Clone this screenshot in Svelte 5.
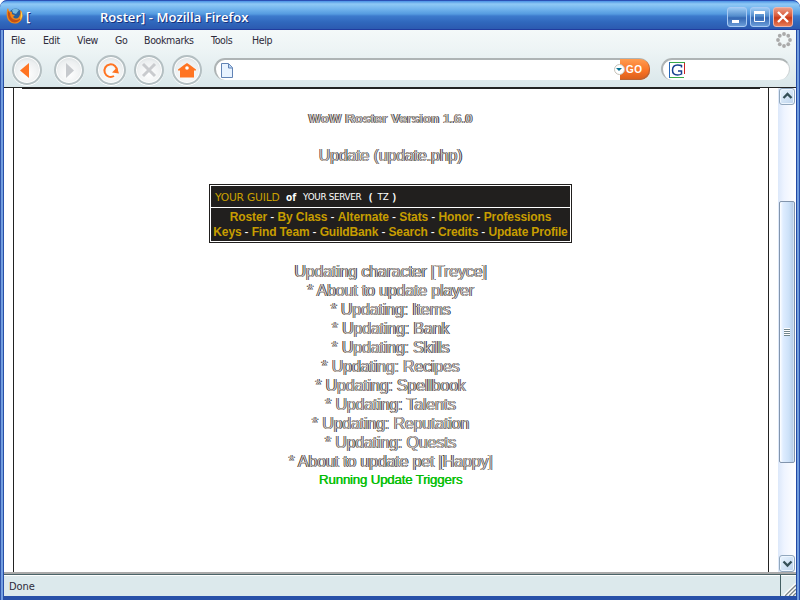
<script>
  const menus = [['File', 32], ['Edit', 34], ['View', 38], ['Go', 29], ['Bookmarks', 67], ['Tools', 41], ['Help', 30]];
  const rows = [
    ['Roster', 'By Class', 'Alternate', 'Stats', 'Honor', 'Professions'],
    ['Keys', 'Find Team', 'GuildBank', 'Search', 'Credits', 'Update Profile']
  ];
  const log = ['Updating character [Treyce]', '* About to update player', '* Updating: Items', '* Updating: Bank',
    '* Updating: Skills', '* Updating: Recipes', '* Updating: Spellbook', '* Updating: Talents',
    '* Updating: Reputation', '* Updating: Quests', '* About to update pet [Happy]'];
  const dots = Array.from({ length: 8 }, (_, i) => [8 + 6 * Math.cos(i * Math.PI / 4), 8 + 6 * Math.sin(i * Math.PI / 4)]);
</script>

<div class="window">
  <header class="title">
    <svg class="fox" width="18" height="18" viewBox="0 0 18 18">
      <circle cx="9.5" cy="8" r="6.5" fill="#285e9c" />
      <path d="M6 3Q9 0 13 3L10 7L7 6Z" fill="#78b9dd" />
      <path d="M1 3Q0 9 2 13Q6 18 12 16Q18 13 16 5L14 3Q15 7 13 10Q10 13 7 10L9 8Q5 8 6 5L3 4L2 1Z" fill="#ee871b" />
      <path d="M2 4Q1 12 6 15Q13 17 16 9Q14 13 10 13Q4 12 4 6Z" fill="#c45113" />
      <path d="M15 4Q18 9 14 13L15 8Z" fill="#ffd54c" />
    </svg>
    <span class="bracket">[</span><span class="caption">Roster] - Mozilla Firefox</span>
    <div class="controls">
      <span class="ctl"><svg width="20" height="20"><path d="M5 14.5h7" stroke="#fff" stroke-width="3" /></svg></span>
      <span class="ctl"><svg width="20" height="20"><path d="M4.5 5.5h10v9h-10z" fill="none" stroke="#fff" /><path d="M4 5.5h11" stroke="#fff" stroke-width="3" /></svg></span>
      <span class="ctl close"><svg width="20" height="20"><path d="M5 5l10 10M15 5L5 15" stroke="#fff" stroke-width="2.4" /></svg></span>
    </div>
  </header>

  <div class="chrome">
    <nav class="menu">
      {#each menus as [name, w]}<span style="width:{w}px">{name}</span>{/each}
      <svg class="throbber" width="16" height="16">
        {#each dots as [x, y]}<circle cx={x} cy={y} r="1.9" fill="#aaa" />{/each}
      </svg>
    </nav>
    <div class="tools">
      <span class="round"><svg width="30" height="30"><path d="M17 8v15L8 15.500z" fill="#ff7422" /></svg></span>
      <span class="round b2"><svg width="30" height="30"><path d="M12 8v15l8-7.500z" fill="#c6c9cd" /></svg></span>
      <span class="round b3"><svg width="30" height="30"><path d="M18 21A6.300 6.300 0 1 1 21 16" fill="none" stroke="#ff7422" stroke-width="2" /><path d="M16 17.500l5-5 2 6z" fill="#ff7422" /></svg></span>
      <span class="round b4"><svg width="30" height="30"><path d="M9 9l12 12M21 9L9 21" stroke="#c9cbce" stroke-width="3" /></svg></span>
      <span class="round b5"><svg width="30" height="30"><path d="M6 14.500l6-4.500 3-2 3 2 6 4.500v1h-2v7H8v-7H6z" fill="#ff7422" /><circle cx="15" cy="13" r="1.8" fill="#fff" /></svg></span>
      <div class="address">
        <svg width="12" height="15" viewBox="0 0 12 15"><path d="M.5 .5h7l4 4v10H.5z" fill="#e8f3ff" stroke="#6183b5" /><path d="M7.500 1v4h4" fill="#bcd6f6" stroke="#6183b5" /></svg>
        <span class="go"><i><svg width="10" height="10"><path d="M2 4h6L5 7z" fill="#067191" /></svg></i>GO</span>
      </div>
      <div class="search">
        <svg width="17" height="17"><path d="M1 .5h15M1 15.500h14" stroke="#39a948" /><path d="M.5 0v16" stroke="#2366b8" /><path d="M15.500 1v11" stroke="#c22" /><path d="M12.500 5.500V3.500Q11 3 8.500 3Q3.500 3 3.500 8.300Q3.500 13 8.500 13Q11 13 12.500 12V9H9" fill="none" stroke="#174090" stroke-width="1.500" /></svg>
      </div>
    </div>
  </div>

  <div class="view">
    <main>
      <div class="rule"></div>
      <div class="version faded">WoW Roster Version 1.6.0</div>
      <div class="heading faded">Update (update.php)</div>
      <section class="guild">
        <div class="guild-top"><span class="gold">YOUR GUILD</span><b>of</b><span class="server">YOUR SERVER</span><b class="paren">(</b><span class="tz">TZ</span><b>)</b></div>
        <div class="links">
          {#each rows as row, r}
            <div class:second={r === 1}>{#each row as link, i}{#if i}<em>{' - '}</em>{/if}{link}{/each}</div>
          {/each}
        </div>
      </section>
      <div class="log">
        {#each log as line}<div class="faded">{line}</div>{/each}
        <div class="running">Running Update Triggers</div>
      </div>
    </main>
    <aside class="scroll">
      <span class="arrow"><svg width="15" height="15"><path d="M3.500 9l4-4 4 4" fill="none" stroke="#355058" stroke-width="2.300" /></svg></span>
      <span class="thumb"><i></i></span>
      <span class="arrow"><svg width="15" height="15"><path d="M3.500 5.500l4 4 4-4" fill="none" stroke="#355058" stroke-width="2.300" /></svg></span>
    </aside>
  </div>

  <footer>
    <span>Done</span>
    <svg width="16" height="21"><path d="M.5 0v21" stroke="#435f63" /><path d="M4 21L16 9M8 21l8-8M12 21l4-4" stroke="#fff" stroke-width="2.500" /><path d="M5 21L16 10M9 21l7-7M13 21l3-3" stroke="#7c8587" stroke-width="1.300" /></svg>
  </footer>
</div>

<style>
  :global(body) { margin: 0; background: #fff; overflow: hidden; }
  * { box-sizing: border-box; }
  svg { display: block; flex: none; }
  .window { width: 800px; height: 600px; display: flex; flex-direction: column; padding: 0 4px 4px; border-radius: 7px 7px 0 0; overflow: hidden;
    background: linear-gradient(90deg, #3156ac 0 1px, #739fe0 1px 3px, #2850a8 3px 4px, #2850a8 4px 796px, #2149a5 796px 797px, #719ddd 797px 799px, #2951ac 799px); font-family: "Liberation Sans", sans-serif; }
  .title { height: 30px; flex: none; margin: 0 -4px; padding: 0 7px 0 6px; display: flex; align-items: center; border-top: 1px solid #2c51b6; border-bottom: 1px solid #213c9e; border-radius: 7px 7px 0 0;
    background: linear-gradient(#4b93e5 0, #8fc9f5 3px, #72b4ed 8px, #559be0 13px, #3d7bcd 15px, #3068bd 21px, #2b58ae 29px);
    color: #fff; font: 600 13px/20px "Open Sans", sans-serif; text-shadow: 1px 1px #17327d; }
  .fox { margin-top: 1px; }
  .bracket { width: 76px; padding: 2px 0 0 2px; }
  .caption { padding-top: 4px; white-space: nowrap; letter-spacing: .04px; }
  .controls { margin-left: auto; display: flex; gap: 3px; padding-top: 3px; }
  .ctl { width: 20px; height: 20px; border: 1px solid #a9caf3; border-radius: 3px; background: linear-gradient(#9ccaf3, #538ccc 45%, #3568b3 55%, #6a9cd8); }
  .ctl svg { margin: -1px; }
  .close { border-color: #edb5ac; background: linear-gradient(#eb9b84, #d85737 45%, #c93a18 55%, #e77b56); }
  .chrome { height: 58px; flex: none; background: linear-gradient(#f4f9f9, #edf4f5 20px, #dae7ea 56px); border-bottom: 1px solid #222; }
  .menu { height: 21px; display: flex; padding: 3px 4px 0 7px; font: 10.500px/15px "DejaVu Sans Condensed", sans-serif; color: #2e2b3a; letter-spacing: -.35px; }
  .menu span { white-space: nowrap; }
  .throbber { margin: -1px 0 0 auto; }
  .tools { height: 36px; display: flex; align-items: center; padding: 1px 5px 0 8px; }
  .round { width: 30px; height: 30px; flex: none; border-radius: 50%; border: 2px solid #b4bfc2; background: radial-gradient(circle at 50% 65%, #fff, #eceff0 60%, #c9d1d4); box-shadow: inset 0 0 0 1px #fff, 0 1px #fff; }
  .round svg { margin: -2px; }
  .b2, .b3 { margin-left: 12px; }
  .b4, .b5 { margin-left: 8px; }
  .address, .search { height: 22px; background: #fff; border: 2px solid #aeb4b5; border-right: 0; border-bottom: 0; border-radius: 12px; display: flex; align-items: center; }
  .address { width: 436px; margin: -1px 0 0 12px; padding-left: 5px; }
  .search { width: 129px; margin: -1px 0 0 11px; padding-left: 6px; border-right: 1px solid #ccd2d4; }
  .go { margin: -2px 0 0 auto; display: flex; align-items: center; width: 30px; height: 21px; color: #fff; font: 700 10px/19px "Liberation Sans", sans-serif; letter-spacing: .5px; background: linear-gradient(#ff9c50, #f97326 55%, #d95d1b); border-radius: 0 10px 10px 0; box-shadow: inset -1px -1px #ba6538; }
  .go i { width: 11px; height: 11px; flex: none; border-radius: 50%; background: #fff; border: 1px solid #c6c2b8; margin: 0 1px 0 -6px; }
  .go svg { margin: -1px; }
  .view { height: 484px; display: flex; flex: none; background: #fff; }
  main { width: 756px; margin: 0 9px; padding-right: 1px; border: 1px solid #222; border-width: 0 1px; display: flex; flex-direction: column; align-items: center; }
  .rule { height: 1px; width: 738px; background: #222; }
  .faded { color: rgba(255, 255, 255, .72); text-shadow: -.55px 0 #3a1c04, .55px 0 #06183a; white-space: nowrap; letter-spacing: -.17px; }
  .version { font-size: 13.330px; line-height: 16px; margin-top: 22px; font-weight: 700; letter-spacing: 0; }
  .heading { font-size: 16px; line-height: 19px; margin-top: 19px; }
  .guild { width: 363px; height: 59px; border: 1px solid #211f1e; padding: 1px; background: #fff; margin-top: 19px; display: flex; flex-direction: column; gap: 1px; }
  .guild-top { height: 21px; background: #211f1e; color: #fff; padding: 1px 0 0 4px; display: flex; align-items: center; white-space: nowrap; font: 8.800px/19px "DejaVu Sans", sans-serif; }
  .guild-top b { font: 700 10px/19px "Open Sans", sans-serif; }
  .gold { color: #c9a000; font-size: 10.700px; width: 71px; letter-spacing: -.2px; }
  .server { margin-left: 7px; width: 62px; letter-spacing: -.3px; }
  .paren { margin: 0 5px 0 4px; }
  .tz { width: 15px; }
  .links { height: 33px; background: #211f1e; color: #c79d00; display: flex; flex-direction: column; align-items: center; font: 700 12px/15px "Liberation Sans", sans-serif; padding-top: 2px; white-space: pre; letter-spacing: -.1px; }
  .links .second { letter-spacing: -.15px; }
  .links em { font-style: normal; font-weight: 400; color: #fff; }
  .log { margin-top: 19px; text-align: center; font-size: 16px; line-height: 19px; }
  .running { color: #08b908; font-size: 13.330px; line-height: 17px; text-shadow: .5px 0 #08d508; letter-spacing: -.21px; }
  .scroll { width: 18px; display: flex; flex-direction: column; background: linear-gradient(90deg, #dce8fa, #eef4ff 6px, #fff); }
  .arrow { width: 16px; height: 17px; margin-left: 1px; flex: none; border: 1px solid #91a7bd; border-radius: 3px; background: linear-gradient(135deg, #eaf5ff, #bcd3ec); box-shadow: inset 0 0 0 1px #edf6ff; }
  .thumb { width: 16px; height: 262px; margin: 96px 0 92px 1px; border: 1px solid #8295ad; border-radius: 2px; background: linear-gradient(90deg, #fff, #dfedff 3px, #cce1f8 9px, #b7cee9 13px, #eff6ff); display: flex; align-items: center; justify-content: center; }
  .thumb i { width: 6px; height: 8px; background: repeating-linear-gradient(#fff 0 1px, #71868d 1px 2px); }
  footer { height: 24px; flex: none; background: #dce9ec; border-top: 2px solid #aaa; display: flex; align-items: center; justify-content: space-between; padding: 0 0 0 5px; box-shadow: inset 0 1px #4a6468, inset 0 2px #fff; font: 11px/14px "DejaVu Sans Condensed", sans-serif; letter-spacing: -.05px; color: #2e2b3a; }
  footer span { padding-top: 3px; }
</style>
